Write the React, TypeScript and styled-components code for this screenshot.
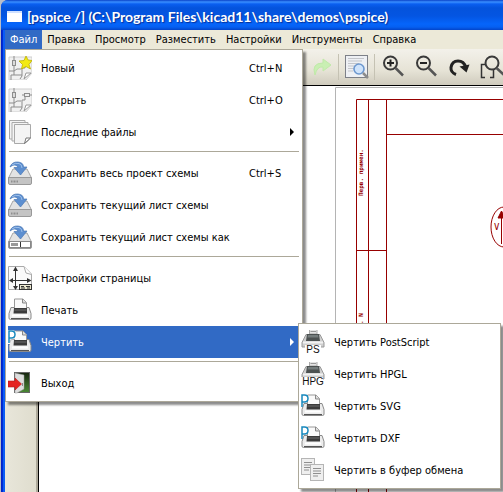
import React from 'react';
import styled, { createGlobalStyle, css } from 'styled-components';

const Global = createGlobalStyle`
  * { box-sizing: border-box; }
  html, body, #root { height: 100%; }
  body {
    margin: 0;
    overflow: hidden;
    background: #c9ccd8;
    font-family: 'DejaVu Sans Condensed', 'DejaVu Sans', sans-serif;
    font-size: 11px;
    line-height: 16px;
    color: #000;
  }
  button { font: inherit; color: inherit; border: 0; margin: 0; background: none; }
  ul { list-style: none; margin: 0; padding: 0; }
`;

const Desktop = styled.div`
  height: 100%;
  padding-left: 1px;
  background: #b9bdc9;
`;

const Frame = styled.div`
  display: flex;
  flex-direction: column;
  height: 100%;
  padding-left: 4px;
  border-radius: 7px 0 0 0;
  background: linear-gradient(90deg, #001ec4 0, #0030d8 2px, #0a5cf5 2px, #0a5cf5 4px);
  overflow: hidden;
`;

const TitleBar = styled.header`
  display: flex;
  flex: none;
  align-items: center;
  gap: 5px;
  height: 30px;
  margin-left: -4px;
  padding: 4px 0 0 6px;
  background: linear-gradient(#0a42c8 0, #3a8fff 2px, #0a5ff0 4px, #0453dc 8px, #0455e2 16px, #0565fb 24px, #0560f2 27px, #0344c9 30px);
`;

const AppIcon = styled.span`
  width: 15px;
  height: 11px;
  margin-bottom: 2px;
  border-top: 2px solid #cfe0ff;
  background: #fff;
`;

const Title = styled.h1`
  margin: 0;
  font: 700 14px/20px Lato, sans-serif;
  color: #fff;
  text-shadow: 1px 1px 1px #06309a;
  white-space: nowrap;
`;

const MenuBar = styled.nav`
  display: flex;
  flex: none;
  height: 19px;
  background: #ece9d8;
`;

const MenuButton = styled.button<{ $open?: boolean }>`
  flex: none;
  padding: 1px 5px 0;
  line-height: 18px;
  white-space: nowrap;
  ${p => p.$open && css`background: #316ac5; color: #fff;`}
`;

const MenuAnchor = styled.div`
  position: relative;
  display: flex;
`;

const popup = css`
  position: absolute;
  z-index: 2;
  padding: 2px;
  border: 1px solid #aca899;
  background: #fff;
  box-shadow: 3px 3px 2px rgba(0, 0, 0, 0.45);
`;

const Menu = styled.ul`
  ${popup}
  top: 19px;
  left: 0;
  width: 298px;
`;

const SubMenu = styled.ul`
  ${popup}
  top: -3px;
  left: 290px;
  width: 203px;
`;

const Item = styled.li`
  position: relative;
`;

const ItemButton = styled.button<{ $active?: boolean }>`
  display: flex;
  align-items: center;
  width: 100%;
  height: 32px;
  padding: 0 6px 0 0;
  text-align: left;
  white-space: nowrap;
  ${p => p.$active && css`background: #316ac5; color: #fff;`}
`;

const ItemLabel = styled.span`
  flex: 1;
  padding: 2px 0 0 9px;
`;

const Shortcut = styled.span`
  width: 45px;
  padding-top: 2px;
`;

const Separator = styled.li`
  height: 9px;
  padding: 3px 1px 0;
  &::before {
    content: '';
    display: block;
    height: 1px;
    background: #aca899;
  }
`;

const ToolBar = styled.div`
  display: flex;
  flex: none;
  align-items: center;
  gap: 2px;
  height: 36px;
  padding: 0 0 0 300px;
  background: linear-gradient(#f3f1ea, #e6e3d6 60%, #cfcbbd);
  overflow: hidden;
`;

const ToolButton = styled.button`
  display: flex;
  flex: none;
  align-items: center;
  justify-content: center;
  width: 31px;
  height: 30px;
  padding: 0;
`;

const ToolDivider = styled.span`
  flex: none;
  width: 1px;
  height: 26px;
  background: #c5c2b3;
`;

const Work = styled.div`
  display: flex;
  flex: 1;
  min-height: 0;
`;

const SideBar = styled.aside`
  flex: none;
  width: 33px;
  border-right: 2px solid #aca899;
  background: linear-gradient(90deg, #e8e6da, #dfddce);
`;

const Canvas = styled.main`
  flex: 1;
  min-width: 0;
  border-top: 1px solid #000;
  border-left: 1px solid #000;
  background: #fff;
`;

const Sheet = styled.svg`
  display: block;
  width: 100%;
  height: 100%;
`;

const Icon = styled.svg`
  flex: none;
  display: block;
  width: 24px;
  height: 24px;
`;

const Arrow = styled.svg`
  flex: none;
  width: 4px;
  height: 8px;
`;

const SchematicBase = () => (
  <>
    <path d="M1 1H24V17L18 24H1Z" fill="#f1f1f1" stroke="#cfcfcf" strokeWidth="1" />
    <path d="M6 0V4M6 9V15M1 15H6M6 15L9 13H13M6 15V19M3 19V24M3 19H6M17 9V12M14 12V20L12 23M9 19H14M14 12H17M6 19H9" fill="none" stroke="#8d8d8d" />
    <rect x="4.500" y="4.500" width="3" height="5" fill="#ddd" stroke="#8d8d8d" />
    <path d="M16 23L18 17H23Z" fill="#fff" stroke="#9a9a9a" />
  </>
);

const NewIcon = () => (
  <Icon viewBox="0 0 24 24">
    <SchematicBase />
    <path d="M18 0L20 4L24 4.500L21 8.500L22.500 13L18 10.500L13.500 13L14.500 8.500L11 5L16 4.500Z" fill="#f3ea12" stroke="#bdb000" strokeWidth="0.800" />
  </Icon>
);

const OpenIcon = () => (
  <Icon viewBox="0 0 24 24">
    <SchematicBase />
    <path d="M14 7H16M22 7H24" stroke="#8d8d8d" />
    <rect x="16.500" y="5.500" width="5" height="3" fill="#eee" stroke="#8d8d8d" />
  </Icon>
);

const RecentIcon = () => (
  <Icon viewBox="0 0 24 24">
    <g fill="#f4f4f4" stroke="#a9a9a9">
      <path d="M1.500 0.500H17V19H1.500Z" />
      <path d="M4 2.500H20V21H4Z" />
      <path d="M6.500 4.500H22.500V18L17 23.500H6.500Z" />
      <path d="M16.500 23.500L18 18H22.500Z" fill="#fff" stroke="#777" />
    </g>
  </Icon>
);

const SaveIcon = ({ field }: { field?: boolean }) => (
  <Icon viewBox="0 0 24 24">
    <path d="M5 8H19L23.500 17H0.500Z" fill="#e3e3e3" stroke="#a5a5a5" />
    <path d="M0.500 16.500H23.500V22Q23.500 23.500 22 23.500H2Q0.500 23.500 0.500 22Z" fill="#c4c4c4" stroke="#999" />
    {field ? (
      <>
        <rect x="1.500" y="16.500" width="21" height="6" fill="#fff" stroke="#888" />
        <path d="M3 19.500H10" stroke="#999" strokeWidth="3" />
        <path d="M12.500 17V22" stroke="#333" />
      </>
    ) : (
      <path d="M3 20.500H10" stroke="#8f8f8f" strokeWidth="2" strokeDasharray="1 0.500" />
    )}
    <path d="M2 6Q4 0.500 10 1Q15.500 1.500 15.500 6H19L12.500 14L6 6.500H10Q9 3.500 6 4Q4 4.500 2 6Z" fill="#5d8fd0" stroke="#4a78b5" strokeWidth="0.700" />
    <path d="M4 4Q7 1.500 11 2.500Q14 3.500 14 7" fill="none" stroke="#9dc0ea" />
  </Icon>
);

const PageIcon = () => (
  <Icon viewBox="0 0 24 24">
    <path d="M0.500 0.500H16L23.500 8V23.500H0.500Z" fill="#fafafa" stroke="#aaa" />
    <path d="M16 0.500L18 7L23.500 8.500" fill="#fff" stroke="#aaa" />
    <path d="M7.500 3V22M3 14.500H21" stroke="#333" fill="none" />
    <path d="M7.500 0.500L10 5H5ZM7.500 24L10 20H5ZM1 14.500L5 12V17ZM23.500 14.500L19 12V17Z" fill="#333" />
    <rect x="11.500" y="18.500" width="12" height="5" fill="#ebe8cf" stroke="#333" />
    <path d="M13 20.500H16M18 20.500H22M13 22H17M19 22H22" stroke="#333" />
  </Icon>
);

const PrinterShape = () => (
  <>
    <path d="M3 9.500H21L23 15.500V20Q23 21.500 21.500 21.500H2.500Q1 21.500 1 20V15.500Z" fill="#ececec" stroke="#8a8a8a" />
    <path d="M6.500 1H15L18.500 4.500V12H6.500Z" fill="#fafafa" stroke="#999" />
    <path d="M14.500 1V5H18.500" fill="#ddd" stroke="#888" />
    <path d="M6 10H19V15.500H5.500Z" fill="#3b3b3b" />
    <path d="M6.500 12H18.500" stroke="#6c6c6c" />
    <path d="M3 20.500H21" stroke="#555" />
    <path d="M4 17.500H20" stroke="#fff" strokeWidth="2" />
  </>
);

const PrintIcon = () => (
  <Icon viewBox="0 0 24 24"><PrinterShape /></Icon>
);

const PlotIcon = ({ rim }: { rim?: boolean }) => (
  <Icon viewBox="0 0 24 24">
    <PrinterShape />
    {rim && <path d="M1 14V1.500H3.500Q7 1.500 7 4.500Q7 8 3.500 8H1" fill="#fff" stroke="#fff" strokeWidth="3" />}
    <path d="M1 13V1H3.500Q7 1 7 4.500Q7 8 3.500 8H1" fill={rim ? 'none' : '#fff'} stroke="#1788bd" strokeWidth="1.500" />
  </Icon>
);

const FormatIcon = ({ text }: { text: string }) => (
  <Icon viewBox="0 0 24 24">
    <path d="M8.500 -0.500H16V4H8.500Z" fill="#e4e4e4" stroke="#aaa" />
    <path d="M9.500 1.500H15" stroke="#999" />
    <path d="M5 4.500H19L23 12.500V17H1V12.500Z" fill="#cfcfcf" stroke="#999" />
    <path d="M6 4H18L19 11H5Z" fill="#4c5151" />
    <path d="M7 5H17L17.500 7.500H6.500Z" fill="#747c7c" />
    <path d="M2 12.500H22" stroke="#f2f2f2" strokeWidth="2" />
    <rect x={text.length > 2 ? 0 : 4} y="15" width={text.length > 2 ? 22 : 16} height="9" fill="#fff" />
    <text x="12" y="23" textAnchor="middle" fontFamily="Liberation Sans, sans-serif" fontSize="10" fill="#111">{text}</text>
  </Icon>
);

const ClipboardIcon = () => (
  <Icon viewBox="0 0 24 24">
    <g fill="#efefef" stroke="#b5b5b5">
      <rect x="0.500" y="0.500" width="13" height="16" />
      <path d="M3 4.500H11M3 7H11M3 9.500H11M3 12H8" stroke="#8f8f8f" />
      <rect x="9.500" y="6.500" width="13" height="16" />
      <path d="M12 10.500H20M12 13H20M12 15.500H20M12 18H17" stroke="#8f8f8f" />
    </g>
  </Icon>
);

const ExitIcon = () => (
  <Icon viewBox="0 0 24 24">
    <defs>
      <linearGradient id="grass" x1="0" y1="0" x2="0" y2="1">
        <stop offset="0" stopColor="#16240f" />
        <stop offset="1" stopColor="#4b8a35" />
      </linearGradient>
    </defs>
    <rect x="6.500" y="1.500" width="15" height="20" fill="url(#grass)" stroke="#666" />
    <path d="M7 2L16 4V18L9 22H7Z" fill="#dedede" stroke="#999" strokeWidth="0.500" />
    <path d="M14.500 12V15" stroke="#888" />
    <path d="M0 10H7V7L13.500 13L7 19V16H0Z" fill="#e52320" stroke="#b51a18" strokeWidth="0.600" />
  </Icon>
);

const RedoIcon = () => (
  <Icon viewBox="0 0 24 24">
    <path d="M6 20Q2 8 14 8V4L22 10L14 16V12Q8 11 6 20Z" fill="#c9efb3" stroke="#c0e9a9" />
  </Icon>
);

const ZoomPageIcon = () => (
  <Icon viewBox="0 0 24 24">
    <rect x="0.500" y="0.500" width="22" height="22" fill="#eef0f4" stroke="#7d8088" />
    <path d="M3 3.500H19M3 6H17M3 8.500H14M3 11H10M3 13.500H9M3 16H8" stroke="#c3c5ca" />
    <circle cx="14" cy="14" r="5" fill="#cfe3fb" stroke="#6d98cf" strokeWidth="1.600" />
    <path d="M18 18L23 23" stroke="#8c8c8c" strokeWidth="2.500" />
  </Icon>
);

const Magnifier = ({ plus }: { plus?: boolean }) => (
  <Icon viewBox="0 0 24 24">
    <circle cx="9.500" cy="8" r="6.500" fill="none" stroke="#3a3a3a" strokeWidth="2" />
    <path d="M14.500 13L22 20.500" stroke="#555" strokeWidth="2.500" />
    <path d={plus ? 'M6 8H13M9.500 4.500V11.500' : 'M6 8H13'} stroke="#222" strokeWidth="2" />
  </Icon>
);

const RedrawIcon = () => (
  <Icon viewBox="0 0 24 24">
    <path d="M9 19.500Q3.500 17.500 4 12.500Q5 6 11 6Q17 6 18.500 12" fill="none" stroke="#222" strokeWidth="3" />
    <path d="M12.500 11.500L22.500 9.500L19.500 17.500Z" fill="#222" />
  </Icon>
);

const FitIcon = () => (
  <Icon viewBox="0 0 24 24">
    <path d="M5 9.500H1.500V22.500H5M10 22.500H13.500V14" fill="none" stroke="#333" strokeWidth="1.500" />
    <circle cx="12" cy="8" r="6.500" fill="none" stroke="#3a3a3a" strokeWidth="2" />
    <path d="M16.500 13L24 20" stroke="#555" strokeWidth="2.500" />
  </Icon>
);

const RightArrow = () => (
  <Arrow viewBox="0 0 4 8"><path d="M0 0L4 4L0 8Z" fill="currentColor" /></Arrow>
);

type Entry = { label: string; icon: React.ReactNode; keys?: string; sub?: Entry[] };

const groups: Entry[][] = [
  [
    { label: 'Новый', icon: <NewIcon />, keys: 'Ctrl+N' },
    { label: 'Открыть', icon: <OpenIcon />, keys: 'Ctrl+O' },
    { label: 'Последние файлы', icon: <RecentIcon />, sub: [] },
  ],
  [
    { label: 'Сохранить весь проект схемы', icon: <SaveIcon />, keys: 'Ctrl+S' },
    { label: 'Сохранить текущий лист схемы', icon: <SaveIcon /> },
    { label: 'Сохранить текущий лист схемы как', icon: <SaveIcon field /> },
  ],
  [
    { label: 'Настройки страницы', icon: <PageIcon /> },
    { label: 'Печать', icon: <PrintIcon /> },
    {
      label: 'Чертить',
      icon: <PlotIcon rim />,
      sub: [
        { label: 'Чертить PostScript', icon: <FormatIcon text="PS" /> },
        { label: 'Чертить HPGL', icon: <FormatIcon text="HPG" /> },
        { label: 'Чертить SVG', icon: <PlotIcon /> },
        { label: 'Чертить DXF', icon: <PlotIcon /> },
        { label: 'Чертить в буфер обмена', icon: <ClipboardIcon /> },
      ],
    },
  ],
  [{ label: 'Выход', icon: <ExitIcon /> }],
];

const MenuEntry = ({ entry }: { entry: Entry }) => {
  const open = !!entry.sub && entry.sub.length > 0;
  return (
    <Item>
      <ItemButton $active={open}>
        {entry.icon}
        <ItemLabel>{entry.label}</ItemLabel>
        {entry.keys && <Shortcut>{entry.keys}</Shortcut>}
        {entry.sub && <RightArrow />}
      </ItemButton>
      {open && (
        <SubMenu>
          {entry.sub!.map(s => <MenuEntry key={s.label} entry={s} />)}
        </SubMenu>
      )}
    </Item>
  );
};

const Drawing = () => (
  <Sheet>
    <path d="M296.500 2000V1.500H4000" fill="none" stroke="#b4b4b4" />
    <g fill="none" stroke="#970000">
      <path d="M317.500 2000V13.500H4000M329.500 13V2000M347.500 13V2000M347.500 48.500H4000M317 164.500H348" />
      <ellipse cx="465" cy="141" rx="13" ry="20" />
      <path d="M462.500 158V128" />
      <path d="M459 132L462.500 125L466 132Z" fill="#970000" />
    </g>
    <g fill="#970000" fontFamily="DejaVu Sans Mono, monospace" fontSize="6" fontWeight="700">
      <text transform="translate(324 110) rotate(-90)">Перв. примен.</text>
      <text transform="translate(324 256) rotate(-90)">Справ. N</text>
      <text x="455" y="144" fontSize="9" fontWeight="400">V</text>
    </g>
  </Sheet>
);

export default function App() {
  return (
    <Desktop>
      <Global />
      <Frame>
        <TitleBar>
          <AppIcon />
          <Title>[pspice /] (C:\Program Files\kicad11\share\demos\pspice)</Title>
        </TitleBar>
        <MenuBar>
          <MenuAnchor>
            <MenuButton $open>Файл</MenuButton>
            <Menu>
              {groups.map((g, i) => (
                <React.Fragment key={i}>
                  {i > 0 && <Separator />}
                  {g.map(e => <MenuEntry key={e.label} entry={e} />)}
                </React.Fragment>
              ))}
            </Menu>
          </MenuAnchor>
          {['Правка', 'Просмотр', 'Разместить', 'Настройки', 'Инструменты', 'Справка'].map(m => (
            <MenuButton key={m}>{m}</MenuButton>
          ))}
        </MenuBar>
        <ToolBar>
          <ToolButton aria-label="Повторить"><RedoIcon /></ToolButton>
          <ToolDivider />
          <ToolButton aria-label="Просмотр страницы"><ZoomPageIcon /></ToolButton>
          <ToolDivider />
          <ToolButton aria-label="Увеличить"><Magnifier plus /></ToolButton>
          <ToolButton aria-label="Уменьшить"><Magnifier /></ToolButton>
          <ToolButton aria-label="Обновить"><RedrawIcon /></ToolButton>
          <ToolButton aria-label="По размеру"><FitIcon /></ToolButton>
        </ToolBar>
        <Work>
          <SideBar />
          <Canvas><Drawing /></Canvas>
        </Work>
      </Frame>
    </Desktop>
  );
}
